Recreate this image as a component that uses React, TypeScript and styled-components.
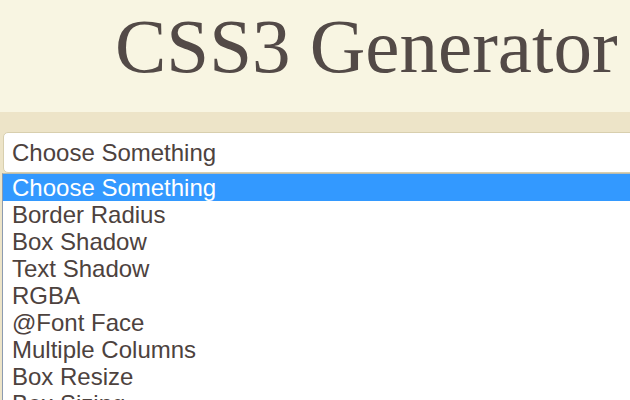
import React from "react";
import styled, { createGlobalStyle } from "styled-components";

const Global = createGlobalStyle`
  html, body {
    margin: 0;
    padding: 0;
    overflow: hidden;
    background: #ffffff;
  }
  body {
    font-family: "Liberation Sans", Arial, sans-serif;
  }
`;

const Page = styled.div`
  width: 630px;
  height: 400px;
  overflow: hidden;
  background: #ffffff;
`;

const Header = styled.header`
  height: 112px;
  box-sizing: border-box;
  padding: 8px 0 0 115px;
  background: #f8f5e2;
`;

const Title = styled.h1`
  margin: 0;
  font-family: "Liberation Serif", "Times New Roman", serif;
  font-weight: normal;
  font-size: 77px;
  line-height: 77px;
  color: #534a47;
  white-space: nowrap;
`;

const Band = styled.div`
  background: #ede4c8;
  padding: 20px 0 0 2px;
`;

const SelectBox = styled.div`
  margin-left: 1px;
  width: 720px;
  height: 41px;
  box-sizing: border-box;
  display: flex;
  align-items: center;
  padding-left: 8px;
  background: #ffffff;
  border: 1px solid #d8cfae;
  border-radius: 5px 0 0 5px;
  font-size: 24px;
  color: #4d423e;
`;

const List = styled.ul`
  list-style: none;
  margin: 0;
  padding: 0 0 0 0;
  width: 720px;
  background: #ffffff;
  border-left: 1px solid #8c9bb0;
  border-top: 1px solid #b9bcb0;
`;

const Item = styled.li<{ $selected?: boolean }>`
  height: 27px;
  line-height: 27px;
  padding-left: 9px;
  font-size: 24px;
  white-space: nowrap;
  background: ${(p) => (p.$selected ? "#3399ff" : "transparent")};
  color: ${(p) => (p.$selected ? "#ffffff" : "#4d423e")};
`;

const options = [
  "Choose Something",
  "Border Radius",
  "Box Shadow",
  "Text Shadow",
  "RGBA",
  "@Font Face",
  "Multiple Columns",
  "Box Resize",
  "Box Sizing",
];

export default function App() {
  return (
    <Page>
      <Global />
      <Header>
        <Title>CSS3 Generator</Title>
      </Header>
      <Band>
        <SelectBox>Choose Something</SelectBox>
        <List>
          {options.map((o, i) => (
            <Item key={o} $selected={i === 0}>
              {o}
            </Item>
          ))}
        </List>
      </Band>
    </Page>
  );
}
